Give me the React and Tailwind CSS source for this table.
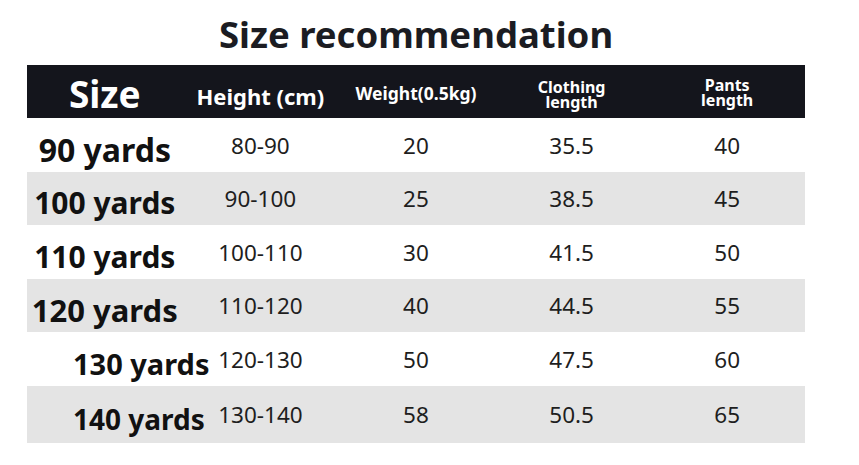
import React from "react";

// label sizes differ a little row to row in the picture, so each row carries its own
const rows = [
  { size: "90 yards", height: "80-90", weight: "20", cloth: "35.5", pants: "40", shade: false, label: "text-[32px]", shift: false },
  { size: "100 yards", height: "90-100", weight: "25", cloth: "38.5", pants: "45", shade: true, label: "text-[30px]", shift: false },
  { size: "110 yards", height: "100-110", weight: "30", cloth: "41.5", pants: "50", shade: false, label: "text-[30px]", shift: false },
  { size: "120 yards", height: "110-120", weight: "40", cloth: "44.5", pants: "55", shade: true, label: "text-[31px]", shift: false },
  { size: "130 yards", height: "120-130", weight: "50", cloth: "47.5", pants: "60", shade: false, label: "text-[29px]", shift: true },
  { size: "140 yards", height: "130-140", weight: "58", cloth: "50.5", pants: "65", shade: true, label: "text-[28px]", shift: true },
];

const cell = "text-center text-[22.5px] leading-none text-[#1e1e1e] pt-[2px]";

const SizeRow = ({ row, last }) => {
  const { size, height, weight, cloth, pants, shade, label, shift } = row;
  return (
    <div
      className={`grid grid-cols-5 items-center ${last ? "h-[57px]" : "h-[53.5px]"} ${
        shade ? "bg-[#e4e4e4]" : "bg-white"
      }`}
    >
      {/* size label, the last two rows sit further right */}
      <div
        className={`whitespace-nowrap ${label} leading-none font-bold text-[#111] pt-[10px] ${
          shift ? "pl-[46px] text-left" : "text-center"
        }`}
      >
        {size}
      </div>
      <div className={cell}>{height}</div>
      <div className={cell}>{weight}</div>
      <div className={cell}>{cloth}</div>
      <div className={cell}>{pants}</div>
    </div>
  );
};

export default function App() {
  return (
    <div className="w-[859px] h-[465px] bg-white font-['Noto_Sans',sans-serif] overflow-hidden">
      <div className="ml-[27px] w-[778px]">
        <h1 className="h-[65px] pt-[10px] text-center text-[36.5px] leading-[48px] font-bold text-[#1b1c22]">
          Size recommendation
        </h1>

        {/* header bar */}
        <div className="grid grid-cols-5 items-center h-[53px] bg-[#14151c] text-white font-bold">
          <div className="text-center text-[37px] leading-none pt-[4px]">Size</div>
          <div className="text-center text-[22px] leading-none pt-[9px]">Height (cm)</div>
          <div className="text-center text-[17.5px] leading-none pt-[5px]">Weight(0.5kg)</div>
          <div className="text-center text-[16px] leading-[15px] pt-[6px]">
            Clothing
            <br />
            length
          </div>
          <div className="text-center text-[16px] leading-[15px] pt-[2px]">
            Pants
            <br />
            length
          </div>
        </div>

        {rows.map((row, i) => (
          <SizeRow key={row.size} row={row} last={i === rows.length - 1} />
        ))}
      </div>
    </div>
  );
}
